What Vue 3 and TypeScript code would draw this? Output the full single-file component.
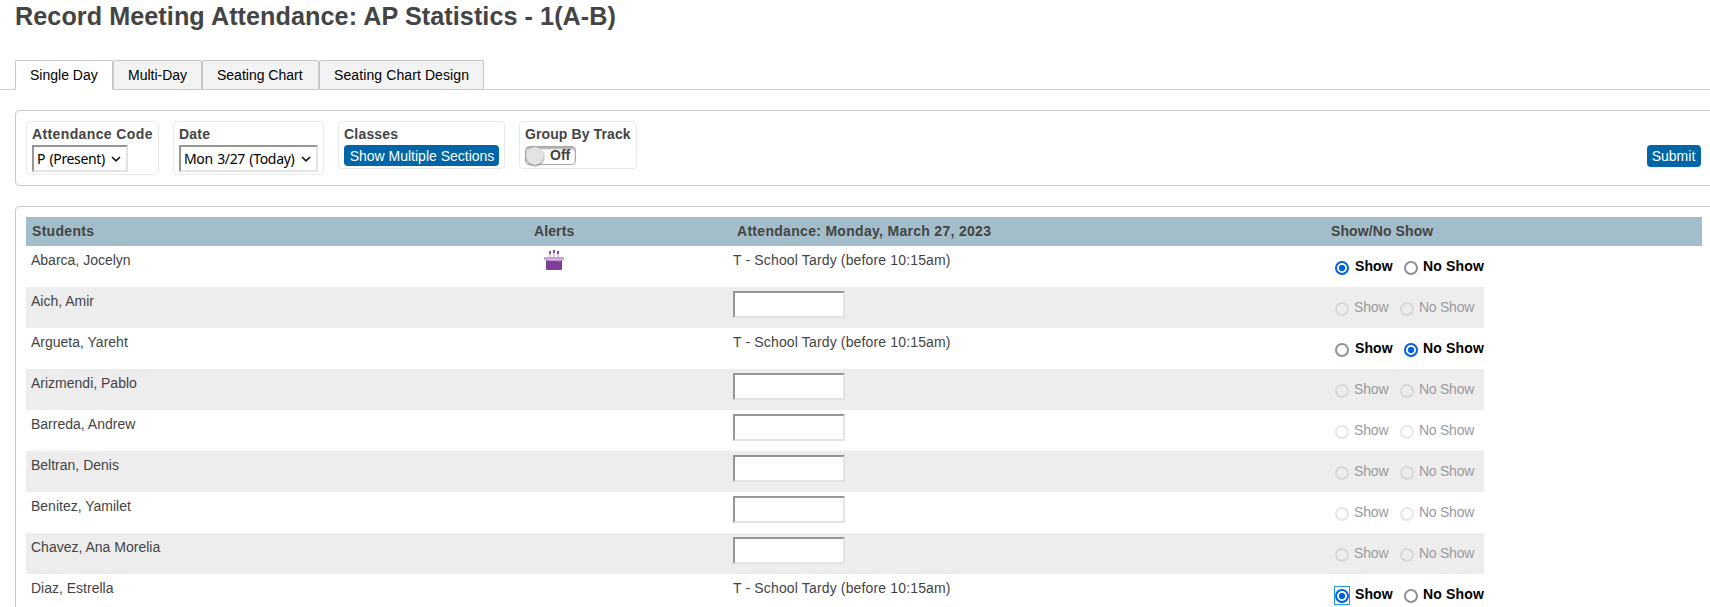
<script setup lang="ts">
interface Student {
  name: string
  tardy: boolean
  choice?: 'show' | 'noshow'
  birthday?: boolean
  focused?: boolean
}

const tabs: { label: string; cls: string }[] = [
  { label: 'Single Day', cls: 'tab-single active' },
  { label: 'Multi-Day', cls: 'tab-multi' },
  { label: 'Seating Chart', cls: 'tab-seating' },
  { label: 'Seating Chart Design', cls: 'tab-design' },
]

const students: Student[] = [
  { name: 'Abarca, Jocelyn', tardy: true, choice: 'show', birthday: true },
  { name: 'Aich, Amir', tardy: false },
  { name: 'Argueta, Yareht', tardy: true, choice: 'noshow' },
  { name: 'Arizmendi, Pablo', tardy: false },
  { name: 'Barreda, Andrew', tardy: false },
  { name: 'Beltran, Denis', tardy: false },
  { name: 'Benitez, Yamilet', tardy: false },
  { name: 'Chavez, Ana Morelia', tardy: false },
  { name: 'Diaz, Estrella', tardy: true, choice: 'show', focused: true },
]
</script>

<template>
  <main class="page">
    <h1>Record Meeting Attendance: AP Statistics - 1(A-B)</h1>

    <nav class="tabs">
      <a v-for="t in tabs" :key="t.label" class="tab" :class="t.cls">{{ t.label }}</a>
      <span class="rest"></span>
    </nav>

    <section class="panel filters">
      <div class="filter f-code">
        <label class="caption c-code">Attendance Code</label>
        <div class="select s-code">
          <span>P (Present)</span>
          <svg width="10" height="6" viewBox="0 0 10 6"><path d="M1 1l4 3.8L9 1" /></svg>
        </div>
      </div>
      <div class="filter f-date">
        <label class="caption c-date">Date</label>
        <div class="select s-date">
          <span>Mon 3/27 (Today)</span>
          <svg width="10" height="6" viewBox="0 0 10 6"><path d="M1 1l4 3.8L9 1" /></svg>
        </div>
      </div>
      <div class="filter f-classes">
        <label class="caption c-date">Classes</label>
        <button class="btn sections">Show Multiple Sections</button>
      </div>
      <div class="filter f-track">
        <label class="caption c-track">Group By Track</label>
        <div class="toggle"><i class="knob"></i><span>Off</span></div>
      </div>
      <button class="btn submit">Submit</button>
    </section>

    <section class="panel roster">
      <div class="grid head">
        <span>Students</span>
        <span class="h-alerts">Alerts</span>
        <span class="h-att">Attendance: Monday, March 27, 2023</span>
        <span class="h-show">Show/No Show</span>
      </div>
      <div v-for="s in students" :key="s.name" class="grid row">
        <span class="name">{{ s.name }}</span>
        <span class="alert">
          <svg v-if="s.birthday" width="20" height="20" viewBox="0 0 20 20">
            <path fill="#8a4aa3" d="M5 1h2v3H5zM9 0h2v3H9zM13 1h2v3h-2z" />
            <path fill="#dcc6e4" d="M5 4h2v3H5zM9 3h2v4H9zM13 4h2v3h-2z" />
            <path fill="#c4a0d0" d="M0 7h20v3H0z" />
            <path fill="#7f3c9b" d="M2 10h16v9q0 1-1 1H3q-1 0-1-1z" />
            <path
              fill="none"
              stroke="#eadcf0"
              stroke-width="1"
              d="M2 9l1.500 1.700L5 9.200l1.500 1.900L8 9.200l1.500 1.900L11 9.200l1.500 1.900L14 9.200l1.500 1.900L18 9"
            />
          </svg>
        </span>
        <span class="att">
          <span v-if="s.tardy" class="tardy">T - School Tardy (before 10:15am)</span>
          <input v-else type="text" class="code" />
        </span>
        <span class="choice" :class="{ disabled: !s.choice }">
          <span class="opt">
            <span class="ring" :class="{ focus: s.focused }">
              <i class="radio" :class="{ on: s.choice === 'show' }"></i>
            </span>
            <b class="t-show">Show</b>
          </span>
          <span class="opt">
            <span class="ring"><i class="radio" :class="{ on: s.choice === 'noshow' }"></i></span>
            <b class="t-noshow">No Show</b>
          </span>
        </span>
      </div>
    </section>
  </main>
</template>

<style>
html,
body {
  margin: 0;
  background: #fff;
  overflow: hidden;
}
</style>

<style scoped>
.page {
  box-sizing: border-box;
  width: 1710px;
  height: 607px;
  padding-top: 2px;
  overflow: hidden;
  background: #fff;
  color: #444;
  font: 14px/16px 'Liberation Sans', Arial, sans-serif;
}
.page * {
  box-sizing: border-box;
}
h1 {
  margin: 0 0 30px 15px;
  font-size: 25.2px;
  line-height: 28px;
  font-weight: bold;
  letter-spacing: 0.06px;
  white-space: nowrap;
}
.tabs {
  display: flex;
  height: 30px;
  padding-left: 15px;
  background: linear-gradient(#ccc, #ccc) left bottom / 15px 1px no-repeat;
}
.tab {
  height: 30px;
  padding-left: 14px;
  border: 1px solid #c8c8c8;
  background: #f3f3f3;
  color: #000;
  line-height: 28px;
  white-space: nowrap;
  border-radius: 2px 2px 0 0;
}
.tab.active {
  background: #fff;
  border-bottom-color: #fff;
}
.tab-single {
  width: 98px;
}
.tab-multi {
  width: 89px;
}
.tab-seating {
  width: 117px;
}
.tab-design {
  width: 165px;
  letter-spacing: 0.1px;
}
.rest {
  flex: 1;
  border-bottom: 1px solid #ccc;
}
.panel {
  margin-left: 15px;
  width: 1710px;
  border: 1px solid #c8c8c8;
  border-radius: 4px;
}
.filters {
  display: flex;
  align-items: flex-start;
  gap: 14px;
  height: 76px;
  margin-top: 20px;
  padding: 10px 23px 0 10px;
}
.filter {
  display: flex;
  flex-direction: column;
  align-items: flex-start;
  gap: 3px;
  height: 54px;
  padding: 4px 5px 0;
  border: 1px solid #e9e9e9;
  border-radius: 4px;
}
.f-code {
  width: 133px;
}
.f-date {
  width: 151px;
}
.f-classes {
  width: 167px;
  height: 48px;
}
.f-track {
  width: 118px;
  height: 48px;
}
.caption {
  font-weight: bold;
  white-space: nowrap;
}
.c-code {
  letter-spacing: 0.38px;
}
.c-date {
  letter-spacing: 0.2px;
}
.c-track {
  letter-spacing: 0.1px;
}
.select {
  display: flex;
  align-items: center;
  justify-content: space-between;
  height: 27px;
  padding: 0 5px 0 3px;
  border: 2px solid;
  border-color: #969696 #e3e3e3 #e3e3e3 #969696;
  background: #fff;
  color: #000;
  font: 14px/23px 'Noto Sans', 'Open Sans', sans-serif;
  white-space: nowrap;
}
.select svg {
  fill: none;
  stroke: #111;
  stroke-width: 1.6;
}
.s-code {
  width: 96px;
  letter-spacing: -0.35px;
  word-spacing: 1px;
}
.s-date {
  width: 139px;
  letter-spacing: -0.33px;
  word-spacing: 1px;
}
.btn {
  padding: 0;
  border: 0;
  border-radius: 4px;
  background: #0066a7;
  color: #fff;
  font: 14px/20px 'Liberation Sans', Arial, sans-serif;
  white-space: nowrap;
  text-align: center;
}
.sections {
  width: 155px;
  height: 21px;
  padding-left: 1px;
}
.submit {
  width: 54px;
  height: 22px;
  margin: 24px 0 0 auto;
  padding-right: 1px;
}
.toggle {
  display: flex;
  width: 51px;
  height: 19px;
  margin-top: 1px;
  border: 1px solid #aaa;
  border-radius: 4px;
  box-shadow: inset 0 2px 2px #aaa;
  font-weight: bold;
  line-height: 17px;
}
.knob {
  flex: none;
  width: 18px;
  height: 18px;
  margin: 0 6px 0 0;
  border-radius: 50%;
  background: #e3e3e3;
  box-shadow: 0 1px 2px #777;
}
.roster {
  height: 430px;
  margin-top: 20px;
  padding: 10px 0 0 10px;
}
.grid {
  display: grid;
  grid-template-columns: 502px 200px 601px auto;
  padding-left: 5px;
}
.grid.head {
  grid-template-columns: 502px 200px 595px auto;
  width: 1676px;
  height: 29px;
  padding: 6px 0 0 6px;
  background: #a3beca;
  font-weight: bold;
  letter-spacing: 0.3px;
}
.h-att {
  padding-left: 3px;
}
.grid .h-show {
  padding-left: 2px;
  letter-spacing: 0.1px;
}
.grid .h-alerts {
  letter-spacing: 0.1px;
}
.row {
  width: 1458px;
  height: 41px;
}
.row:nth-child(odd) {
  background: #ededed;
}
.name {
  padding-top: 6px;
}
.alert {
  padding: 4px 0 0 11px;
}
.tardy {
  display: block;
  padding-top: 6px;
  letter-spacing: 0.15px;
}
.code {
  display: block;
  width: 112px;
  height: 27px;
  margin-top: 4px;
  padding: 0;
  border: 2px solid;
  border-color: #969696 #e3e3e3 #e3e3e3 #969696;
  border-radius: 0;
  background: #fff;
}
.choice {
  display: flex;
  padding-top: 12px;
  color: #000;
  white-space: nowrap;
}
.opt {
  display: flex;
}
.ring {
  display: flex;
  align-items: center;
  justify-content: center;
  width: 16px;
  height: 19px;
  margin: 0 5px 0 0;
}
.ring.focus {
  border: 1px solid #1c9be0;
}
.radio {
  flex: none;
  width: 14px;
  height: 14px;
  border: 2px solid #8f8f9d;
  border-radius: 50%;
  background: #fff;
}
.radio.on {
  border-color: #0060df;
  background: radial-gradient(circle, #0060df 0 2.8px, #fff 3.6px);
}
.t-show {
  width: 48px;
  letter-spacing: 0.1px;
}
.t-noshow {
  margin-left: -1px;
  letter-spacing: 0.15px;
}
.disabled {
  color: #9a9a9f;
}
.disabled b {
  font-weight: normal;
}
.disabled .ring {
  margin-right: 4px;
}
.disabled .t-show {
  width: 45px;
  letter-spacing: -0.15px;
}
.disabled .t-noshow {
  margin-left: 0;
  letter-spacing: -0.25px;
}
.disabled .radio {
  border-color: rgba(143, 143, 157, 0.22);
  background: transparent;
}
</style>
